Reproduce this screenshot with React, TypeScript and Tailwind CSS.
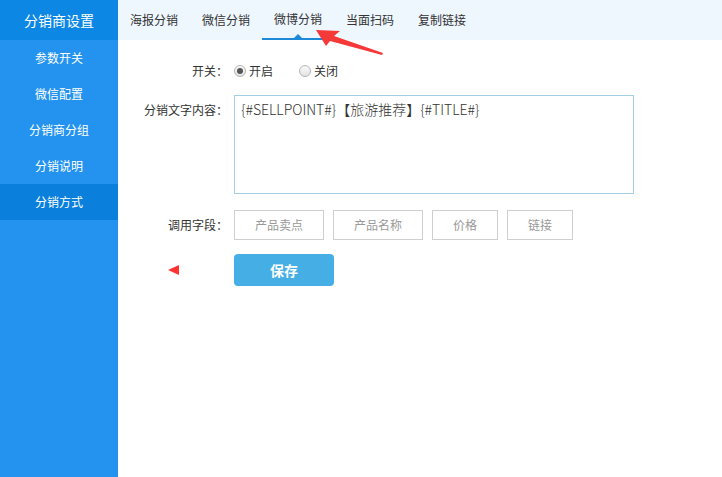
import React, { useState } from "react";

const menu = ["参数开关", "微信配置", "分销商分组", "分销说明", "分销方式"];
const tabs = ["海报分销", "微信分销", "微博分销", "当面扫码", "复制链接"];
const fields = [
  { label: "产品卖点", w: "w-[90px]" },
  { label: "产品名称", w: "w-[90px]" },
  { label: "价格", w: "w-[66px]" },
  { label: "链接", w: "w-[66px]" },
];

const Radio: React.FC<{ checked: boolean; label: string; onClick: () => void }> = ({
  checked,
  label,
  onClick,
}) => (
  <label className="flex items-center gap-[3px] cursor-pointer" onClick={onClick}>
    <span className="w-[12px] h-[12px] rounded-full border border-[#b5b5b5] bg-gradient-to-b from-[#fafafa] to-[#e3e3e3] flex items-center justify-center">
      {checked && <span className="w-[6px] h-[6px] rounded-full bg-[#555]" />}
    </span>
    <span>{label}</span>
  </label>
);

const App: React.FC = () => {
  const [enabled, setEnabled] = useState(true);
  const [activeTab, setActiveTab] = useState(2);

  return (
    <div
      className="flex w-[722px] h-[477px] bg-white text-[12px] text-[#333] overflow-hidden relative"
      style={{ fontFamily: '"Noto Sans CJK SC", "Liberation Sans", sans-serif' }}
    >
      {/* sidebar */}
      <aside className="w-[118px] shrink-0 bg-[#2393ef] text-white">
        <div className="h-[40px] bg-[#0d87e4] flex items-center justify-center text-[14px]">
          分销商设置
        </div>
        <ul>
          {menu.map((m, i) => (
            <li
              key={m}
              className={`h-[36px] flex items-center justify-center ${
                i === menu.length - 1 ? "bg-[#0a7fdb]" : ""
              }`}
            >
              {m}
            </li>
          ))}
        </ul>
      </aside>

      <main className="flex-1 flex flex-col">
        {/* tabs */}
        <nav className="h-[40px] bg-[#eef6fe] flex">
          {tabs.map((t, i) => (
            <button
              key={t}
              onClick={() => setActiveTab(i)}
              className={`relative w-[72px] h-full text-[12px] text-[#333] ${
                i === activeTab ? "border-b-2 border-[#1c8ad9]" : ""
              }`}
            >
              {t}
              {i === activeTab && (
                <span className="absolute left-1/2 -translate-x-1/2 bottom-0 w-0 h-0 border-x-[4px] border-x-transparent border-b-[4px] border-b-[#1c8ad9]" />
              )}
            </button>
          ))}
        </nav>

        {/* form */}
        <div className="pt-[22px]">
          <div className="flex items-center h-[18px]">
            <div className="w-[116px] text-right pr-[6px]">开关：</div>
            <div className="flex items-center gap-[26px] text-[12px]">
              <Radio checked={enabled} label="开启" onClick={() => setEnabled(true)} />
              <Radio checked={!enabled} label="关闭" onClick={() => setEnabled(false)} />
            </div>
          </div>

          <div className="flex mt-[15px]">
            <div className="w-[116px] text-right pr-[6px] pt-[6px]">分销文字内容：</div>
            <textarea
              defaultValue="{#SELLPOINT#}【旅游推荐】{#TITLE#}"
              className="w-[400px] h-[99px] border border-[#a3cfe6] px-[6px] py-[3px] text-[14px] font-light text-[#333] resize-none outline-none"
            />
          </div>

          <div className="flex items-center mt-[16px]">
            <div className="w-[116px] text-right pr-[6px]">调用字段：</div>
            <div className="flex gap-[9px]">
              {fields.map((f) => (
                <button
                  key={f.label}
                  className={`${f.w} h-[30px] border border-[#cfcfcf] text-[#999] text-[12px] bg-white`}
                >
                  {f.label}
                </button>
              ))}
            </div>
          </div>

          <div className="flex items-center mt-[14px]">
            <div className="w-[116px] pl-[50px]">
              <span className="block w-0 h-0 border-y-[5px] border-y-transparent border-r-[11px] border-r-[#f33]" />
            </div>
            <button className="w-[100px] h-[32px] rounded-[4px] bg-[#45aee4] text-white text-[14px] font-bold">
              保存
            </button>
          </div>
        </div>
      </main>

      {/* annotation arrow */}
      <svg
        className="absolute left-[300px] top-[20px] pointer-events-none"
        width="100"
        height="40"
        viewBox="0 0 100 40"
      >
        <polygon points="16,10 40,11 34,16 83,33 82,35 30,21 26,26" fill="#f53838" />
      </svg>
    </div>
  );
};

export default App;
